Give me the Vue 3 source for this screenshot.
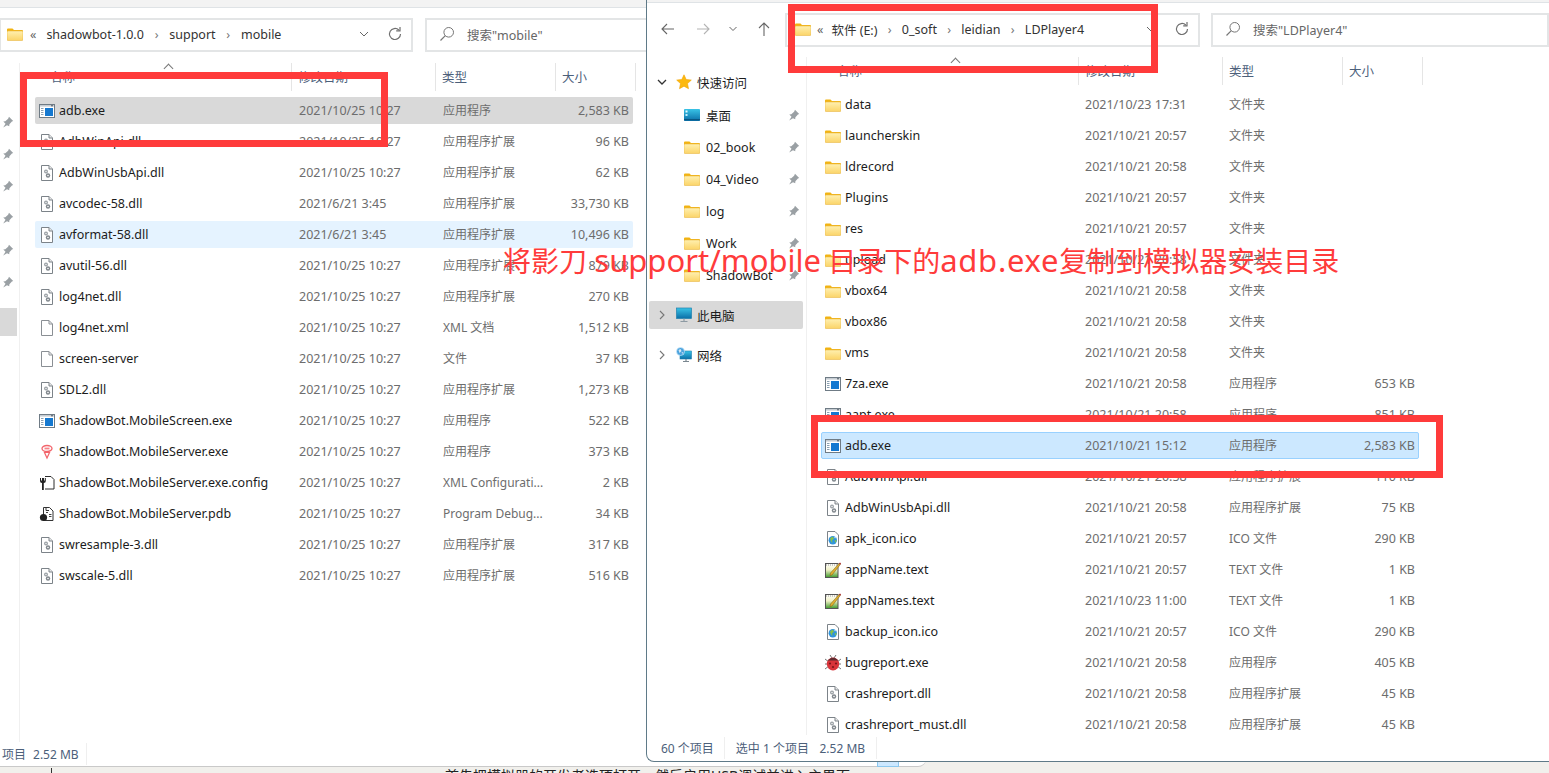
<script setup>
const dll = "应用程序扩展";
const app = "应用程序";
const dir = "文件夹";

const leftFiles = [
  { icon: "exe", name: "adb.exe", date: "2021/10/25 10:27", type: app, size: "2,583 KB", state: "picked" },
  { icon: "dll", name: "AdbWinApi.dll", date: "2021/10/25 10:27", type: dll, size: "96 KB" },
  { icon: "dll", name: "AdbWinUsbApi.dll", date: "2021/10/25 10:27", type: dll, size: "62 KB" },
  { icon: "dll", name: "avcodec-58.dll", date: "2021/6/21 3:45", type: dll, size: "33,730 KB" },
  { icon: "dll", name: "avformat-58.dll", date: "2021/6/21 3:45", type: dll, size: "10,496 KB", state: "hover" },
  { icon: "dll", name: "avutil-56.dll", date: "2021/10/25 10:27", type: dll, size: "879 KB" },
  { icon: "dll", name: "log4net.dll", date: "2021/10/25 10:27", type: dll, size: "270 KB" },
  { icon: "file", name: "log4net.xml", date: "2021/10/25 10:27", type: "XML 文档", size: "1,512 KB" },
  { icon: "file", name: "screen-server", date: "2021/10/25 10:27", type: "文件", size: "37 KB" },
  { icon: "dll", name: "SDL2.dll", date: "2021/10/25 10:27", type: dll, size: "1,273 KB" },
  { icon: "exe", name: "ShadowBot.MobileScreen.exe", date: "2021/10/25 10:27", type: app, size: "522 KB" },
  { icon: "server", name: "ShadowBot.MobileServer.exe", date: "2021/10/25 10:27", type: app, size: "373 KB" },
  { icon: "config", name: "ShadowBot.MobileServer.exe.config", date: "2021/10/25 10:27", type: "XML Configurati...", size: "2 KB" },
  { icon: "pdb", name: "ShadowBot.MobileServer.pdb", date: "2021/10/25 10:27", type: "Program Debug...", size: "34 KB" },
  { icon: "dll", name: "swresample-3.dll", date: "2021/10/25 10:27", type: dll, size: "317 KB" },
  { icon: "dll", name: "swscale-5.dll", date: "2021/10/25 10:27", type: dll, size: "516 KB" },
];

const rightFiles = [
  { icon: "folder", name: "data", date: "2021/10/23 17:31", type: dir, size: "" },
  { icon: "folder", name: "launcherskin", date: "2021/10/21 20:57", type: dir, size: "" },
  { icon: "folder", name: "ldrecord", date: "2021/10/21 20:58", type: dir, size: "" },
  { icon: "folder", name: "Plugins", date: "2021/10/21 20:57", type: dir, size: "" },
  { icon: "folder", name: "res", date: "2021/10/21 20:57", type: dir, size: "" },
  { icon: "folder", name: "upload", date: "2021/10/21 20:58", type: dir, size: "" },
  { icon: "folder", name: "vbox64", date: "2021/10/21 20:58", type: dir, size: "" },
  { icon: "folder", name: "vbox86", date: "2021/10/21 20:58", type: dir, size: "" },
  { icon: "folder", name: "vms", date: "2021/10/21 20:58", type: dir, size: "" },
  { icon: "exe", name: "7za.exe", date: "2021/10/21 20:58", type: app, size: "653 KB" },
  { icon: "exe", name: "aapt.exe", date: "2021/10/21 20:58", type: app, size: "851 KB" },
  { icon: "exe", name: "adb.exe", date: "2021/10/21 15:12", type: app, size: "2,583 KB", state: "selected" },
  { icon: "dll", name: "AdbWinApi.dll", date: "2021/10/21 20:58", type: dll, size: "110 KB" },
  { icon: "dll", name: "AdbWinUsbApi.dll", date: "2021/10/21 20:58", type: dll, size: "75 KB" },
  { icon: "ico", name: "apk_icon.ico", date: "2021/10/21 20:57", type: "ICO 文件", size: "290 KB" },
  { icon: "text", name: "appName.text", date: "2021/10/21 20:57", type: "TEXT 文件", size: "1 KB" },
  { icon: "text", name: "appNames.text", date: "2021/10/23 11:00", type: "TEXT 文件", size: "1 KB" },
  { icon: "ico", name: "backup_icon.ico", date: "2021/10/21 20:57", type: "ICO 文件", size: "290 KB" },
  { icon: "bug", name: "bugreport.exe", date: "2021/10/21 20:58", type: app, size: "405 KB" },
  { icon: "dll", name: "crashreport.dll", date: "2021/10/21 20:58", type: dll, size: "45 KB" },
  { icon: "dll", name: "crashreport_must.dll", date: "2021/10/21 20:58", type: dll, size: "45 KB" },
];

const columns = ["名称", "修改日期", "类型", "大小"];

const leftCrumbs = ["shadowbot-1.0.0", "support", "mobile"];
const rightCrumbs = ["软件 (E:)", "0_soft", "leidian", "LDPlayer4"];
const quickAccess = [
  { icon: "desktop", name: "桌面" },
  { icon: "folder", name: "02_book" },
  { icon: "folder", name: "04_Video" },
  { icon: "folder", name: "log" },
  { icon: "folder", name: "Work" },
  { icon: "folder", name: "ShadowBot" },
];
</script>

<template>
  <div class="desk">
    <svg class="defs" width="0" height="0">
      <defs>
        <linearGradient id="folderFill" x1="0" y1="0" x2="0" y2="1">
          <stop offset="0" stop-color="#fff0b0" />
          <stop offset="1" stop-color="#fbd468" />
        </linearGradient>
        <linearGradient id="blueFill" x1="0" y1="0" x2="0" y2="1">
          <stop offset="0" stop-color="#39c3e6" />
          <stop offset="1" stop-color="#0b6fa8" />
        </linearGradient>
        <linearGradient id="noteFill" x1="0" y1="0" x2="0" y2="1">
          <stop offset="0" stop-color="#ffffff" />
          <stop offset=".45" stop-color="#f2f2c8" />
          <stop offset="1" stop-color="#3f9a2c" />
        </linearGradient>
        <symbol id="i-folder" viewBox="0 0 16 16">
          <path d="M0 3.500q0-1 1-1h4.500l1.500 1.500h8q1 0 1 1V6H0z" fill="#f2b311" />
          <rect x="0" y="5" width="16" height="9.500" rx="1" fill="url(#folderFill)" stroke="#e9b949" stroke-width=".6" />
        </symbol>
        <symbol id="i-exe" viewBox="0 0 16 16">
          <rect x=".5" y="1.500" width="15" height="13" fill="#fff" stroke="#6f7b85" />
          <rect x="1" y="2" width="14" height="1.600" fill="#c5ccd2" />
          <path d="M12 2.800h2" stroke="#4b5560" />
          <rect x="6" y="5" width="8" height="8" fill="#1478d0" />
          <path d="M2 5.500h2.500M2 7.500h2.500M2 9.500h2.500M2 11.500h2.500" stroke="#8aa0b2" />
        </symbol>
        <symbol id="i-dll" viewBox="0 0 16 16">
          <path d="M2.500.5h7.500l3.500 3.500v11.500h-11z" fill="#fff" stroke="#7c8389" />
          <path d="M10 .5v3.500h3.500" fill="#e8e8e8" stroke="#7c8389" />
          <circle cx="7" cy="6.500" r="2" fill="#9aa0a5" />
          <circle cx="9" cy="10.500" r="2.200" fill="#80878d" />
          <circle cx="9" cy="10.500" r=".8" fill="#fff" />
          <circle cx="7" cy="6.500" r=".7" fill="#fff" />
        </symbol>
        <symbol id="i-file" viewBox="0 0 16 16">
          <path d="M2.500.5h7.500l3.500 3.500v11.500h-11z" fill="#fff" stroke="#8a8f94" />
          <path d="M10 .5v3.500h3.500" fill="none" stroke="#8a8f94" />
        </symbol>
        <symbol id="i-server" viewBox="0 0 16 16">
          <ellipse cx="8" cy="4.500" rx="5" ry="3" fill="#fff" stroke="#f2646b" stroke-width="1.300" />
          <rect x="5.500" y="3.600" width="5" height="1.800" fill="#f58489" />
          <path d="M5.500 8.500h5L8 14z" fill="#fff" stroke="#f2646b" stroke-width="1.200" />
        </symbol>
        <symbol id="i-config" viewBox="0 0 16 16">
          <path d="M6 1.500h6l3 3v9.500H6" fill="#fff" stroke="#2c2c2c" />
          <path d="M1 3v3q0 2 2 2v7h1.800V8q2 0 2-2V3l-1 0v2.600H5V3H3v2.600H2V3z" fill="#222" />
        </symbol>
        <symbol id="i-pdb" viewBox="0 0 16 16">
          <path d="M4.500 1.500h6l3.500 3.500v9.500H4.500z" fill="#fff" stroke="#333" />
          <path d="M7 6.500h2M10 8.500h2.500M10 10.500h2.500" stroke="#444" />
          <circle cx="4.500" cy="11.500" r="3.600" fill="#222" />
          <path d="M7 1.500v3h3" fill="none" stroke="#333" />
        </symbol>
        <symbol id="i-ico" viewBox="0 0 16 16">
          <path d="M2.500.5h7.500l3.500 3.500v11.500h-11z" fill="#fff" stroke="#7c8389" />
          <circle cx="7.800" cy="9.200" r="4.200" fill="#2f94dc" />
          <path d="M5 7.500l2.500-2 1.500 2-2 2 .5 2.500-1.500-1.500zM9.500 9.500l2.300-.5-1.300 3z" fill="#86c24c" />
          <path d="M9 5.500l2 1-1 1z" fill="#e8f4fb" />
        </symbol>
        <symbol id="i-text" viewBox="0 0 16 16">
          <rect x=".5" y="1.500" width="12.500" height="14" fill="url(#noteFill)" stroke="#555" />
          <path d="M1 3h11" stroke="#999" stroke-dasharray="1 1" />
          <path d="M5.500 11l8.500-9.500 1.300 1L7 13l-2 .5z" fill="#e0b030" stroke="#7a5a10" stroke-width=".5" />
          <path d="M14 1.500l1-1 1 1-.8 1.200z" fill="#a01818" />
        </symbol>
        <symbol id="i-bug" viewBox="0 0 16 16">
          <path d="M0 4l4 3M16 4l-4 3M0 9h3M16 9h-3M0 14l4-3M16 14l-4-3M5 0l2 3M11 0L9 3" stroke="#777" stroke-width="1" />
          <ellipse cx="8" cy="9" rx="6.200" ry="6.500" fill="#d8343a" />
          <path d="M2.500 5.500q5.500-5.500 11 0z" fill="#5d2b2f" />
          <circle cx="5" cy="8.500" r="1.100" fill="#7c1519" />
          <circle cx="11" cy="8.500" r="1.100" fill="#7c1519" />
          <circle cx="8" cy="12" r="1.100" fill="#7c1519" />
        </symbol>
        <symbol id="i-star" viewBox="0 0 16 16">
          <path d="M8 .8l2.200 4.700 5.100.6-3.800 3.500 1 5.100L8 12.200l-4.500 2.500 1-5.100L.7 6.100l5.100-.6z" fill="#fcb90f" stroke="#f2a200" stroke-width=".6" />
        </symbol>
        <symbol id="i-desktop" viewBox="0 0 16 16">
          <rect x="0" y="2" width="16" height="12" rx=".8" fill="url(#blueFill)" />
          <rect x="1.500" y="3.500" width="2" height="2" fill="#e8fbff" />
          <rect x="1.500" y="7" width="2" height="2" fill="#bdeeff" />
          <path d="M0 12.700h16" stroke="#084f7a" />
        </symbol>
        <symbol id="i-computer" viewBox="0 0 16 16">
          <rect x=".5" y="1" width="15" height="10.500" fill="url(#blueFill)" stroke="#1f80ad" stroke-width=".7" />
          <path d="M8 11.500v2.500M4.500 14.500h7" stroke="#8d9aa3" stroke-width="1.200" />
        </symbol>
        <symbol id="i-network" viewBox="0 0 16 16">
          <rect x="4" y="4" width="11.500" height="8" fill="url(#blueFill)" stroke="#1f80ad" stroke-width=".6" />
          <path d="M10 12v2M7 14.500h6" stroke="#7a8790" stroke-width="1.200" />
          <circle cx="4.500" cy="4.500" r="4" fill="#4aa3de" stroke="#dff2ff" stroke-width=".6" />
          <path d="M2.500 3l2-1 1 2-2 2zM5.500 5.500l1.500-.5-.5 2z" fill="#d9e8f2" />
        </symbol>
        <symbol id="i-pin" viewBox="0 0 12 12">
          <path d="M7 .8l4.200 4.200-1.300.5-2.500 2.800-.2 2L5 9.200 1.200 11.500 3.500 7.700 1.300 5.500l2-.2L6.100 2.700z" fill="#9aa0a4" />
        </symbol>
        <symbol id="i-search" viewBox="0 0 16 16">
          <circle cx="9.700" cy="6.300" r="4.800" fill="none" stroke="#767676" />
          <path d="M6.300 9.700L1.500 14.500" stroke="#767676" stroke-width="1.200" />
        </symbol>
        <symbol id="i-refresh" viewBox="0 0 16 16">
          <path d="M13.500 8a5.500 5.500 0 1 1-1.700-4" fill="none" stroke="#6f6f6f" stroke-width="1.200" />
          <path d="M13 1v3.800H9.200" fill="none" stroke="#6f6f6f" stroke-width="1.200" />
        </symbol>
      </defs>
    </svg>

    <!-- back window -->
    <section class="window back">
      <div class="topband"></div>
      <div class="toolbar">
        <div class="address">
          <svg class="addr-folder"><use href="#i-folder" /></svg>
          <span class="double">«</span>
          <template v-for="(c, i) in leftCrumbs" :key="c">
            <span v-if="i" class="chev">›</span>
            <span class="crumb">{{ c }}</span>
          </template>
          <svg class="drop" viewBox="0 0 10 6"><path d="M1 1l4 4 4-4" fill="none" stroke="#666" /></svg>
          <svg class="refresh"><use href="#i-refresh" /></svg>
        </div>
        <div class="search">
          <svg class="search-icon"><use href="#i-search" /></svg>
          <span>搜索"mobile"</span>
        </div>
      </div>
      <div class="body">
        <aside class="stub">
          <svg v-for="n in 6" :key="n" class="stub-pin"><use href="#i-pin" /></svg>
          <div class="stub-sel"></div>
        </aside>
        <main class="main">
          <div class="head">
            <span class="sort"></span>
            <span v-for="col in columns" :key="col" class="head-cell">{{ col }}</span>
          </div>
          <div
            v-for="f in leftFiles"
            :key="f.name"
            class="row"
            :class="f.state"
          >
            <svg class="icon"><use :href="'#i-' + f.icon" /></svg>
            <span class="name">{{ f.name }}</span>
            <span class="date">{{ f.date }}</span>
            <span class="type">{{ f.type }}</span>
            <span class="size">{{ f.size }}</span>
          </div>
        </main>
      </div>
      <div class="status">
        <span>项目</span>
        <span>2.52 MB</span>
        <i class="status-div"></i>
      </div>
    </section>

    <i class="tick"></i>
    <p class="under">首先把模拟器的开发者选项打开，然后启用USB调试并进入主界面</p>
    <div class="peek"></div>

    <!-- front window -->
    <section class="window front">
      <div class="topband"></div>
      <div class="toolbar">
        <div class="nav">
          <svg viewBox="0 0 16 16"><path d="M14 8H2M7 3L2 8l5 5" fill="none" stroke="#666" stroke-width="1.100" /></svg>
          <svg viewBox="0 0 16 16"><path d="M2 8h12M9 3l5 5-5 5" fill="none" stroke="#b4b4b4" stroke-width="1.100" /></svg>
          <svg class="nav-small" viewBox="0 0 10 6"><path d="M1.500 1l3.500 3.500L8.500 1" fill="none" stroke="#666" /></svg>
          <svg viewBox="0 0 16 16"><path d="M8 15V2M3 7l5-5 5 5" fill="none" stroke="#666" stroke-width="1.100" /></svg>
        </div>
        <div class="address">
          <svg class="addr-folder"><use href="#i-folder" /></svg>
          <span class="double">«</span>
          <template v-for="(c, i) in rightCrumbs" :key="c">
            <span v-if="i" class="chev">›</span>
            <span class="crumb">{{ c }}</span>
          </template>
          <svg class="drop" viewBox="0 0 10 6"><path d="M1 1l4 4 4-4" fill="none" stroke="#666" /></svg>
          <svg class="refresh"><use href="#i-refresh" /></svg>
        </div>
        <div class="search">
          <svg class="search-icon"><use href="#i-search" /></svg>
          <span>搜索"LDPlayer4"</span>
        </div>
      </div>
      <div class="body">
        <aside class="tree">
          <div class="tree-row tree-top tree-quick">
            <svg class="tree-arrow" viewBox="0 0 10 10"><path d="M1 3l4 4 4-4" fill="none" stroke="#333" stroke-width="1.300" /></svg>
            <svg class="tree-icon"><use href="#i-star" /></svg>
            <span>快速访问</span>
          </div>
          <div v-for="q in quickAccess" :key="q.name" class="tree-row tree-sub">
            <svg class="tree-icon"><use :href="'#i-' + q.icon" /></svg>
            <span class="tree-name">{{ q.name }}</span>
            <svg class="tree-pin"><use href="#i-pin" /></svg>
          </div>
          <div class="tree-row tree-top tree-picked">
            <svg class="tree-arrow" viewBox="0 0 10 10"><path d="M3 1l4 4-4 4" fill="none" stroke="#777" stroke-width="1.100" /></svg>
            <svg class="tree-icon"><use href="#i-computer" /></svg>
            <span>此电脑</span>
          </div>
          <div class="tree-row tree-top">
            <svg class="tree-arrow" viewBox="0 0 10 10"><path d="M3 1l4 4-4 4" fill="none" stroke="#777" stroke-width="1.100" /></svg>
            <svg class="tree-icon"><use href="#i-network" /></svg>
            <span>网络</span>
          </div>
        </aside>
        <main class="main">
          <div class="head">
            <span class="sort"></span>
            <span v-for="col in columns" :key="col" class="head-cell">{{ col }}</span>
          </div>
          <div
            v-for="f in rightFiles"
            :key="f.name"
            class="row"
            :class="f.state"
          >
            <svg class="icon"><use :href="'#i-' + f.icon" /></svg>
            <span class="name">{{ f.name }}</span>
            <span class="date">{{ f.date }}</span>
            <span class="type">{{ f.type }}</span>
            <span class="size">{{ f.size }}</span>
          </div>
        </main>
      </div>
      <div class="status">
        <span>60 个项目</span>
        <i class="status-div"></i>
        <span>选中 1 个项目</span>
        <span>2.52 MB</span>
        <i class="status-div"></i>
      </div>
    </section>

    <!-- annotations drawn on top of the screenshot -->
    <div class="mark mark-a"></div>
    <div class="mark mark-b"></div>
    <div class="mark mark-c"></div>
    <div class="caption">将影刀 <span class="latin">support/mobile</span> 目录下的<span class="latin wide">adb.exe</span>复制到模拟器安装目录</div>
  </div>
</template>

<style>
html,
body {
  margin: 0;
  overflow: hidden;
}
</style>

<style scoped>
.desk {
  position: relative;
  width: 1549px;
  height: 773px;
  overflow: hidden;
  background: #f1f0ec;
  font-family: "Noto Sans", "Noto Sans CJK SC", sans-serif;
  font-size: 12.5px;
  color: #1c1c1c;
}

.defs {
  position: absolute;
}

.window {
  background: #fff;
  display: flex;
  flex-direction: column;
  box-sizing: border-box;
}

.back {
  width: 926px;
  height: 767px;
  border-bottom: 1px solid #c9c9c9;
  border-bottom-right-radius: 8px;
}

.front {
  position: absolute;
  left: 646px;
  top: 0;
  width: 903px;
  height: 762px;
  border-left: 1px solid #5f7a88;
  border-bottom: 1px solid #5f7a88;
  border-bottom-left-radius: 8px;
}

.topband {
  background: #f3f3f3;
  border-bottom: 1px solid #dfe3e6;
}

.back .topband {
  height: 7px;
}

.front .topband {
  height: 2px;
}

.toolbar {
  display: flex;
  align-items: flex-start;
  padding: 10px 0 8px;
}

.address,
.search {
  box-sizing: border-box;
  height: 34px;
  padding-bottom: 2px;
  border: 2px solid #e3e5e6;
  display: flex;
  align-items: center;
  color: #333;
}

.back .address {
  width: 414px;
  margin-left: -1px;
  margin-right: 12px;
  padding-left: 6px;
}

.back .double {
  margin: 0 10px 0 7px;
}

.back .search {
  width: 300px;
  padding-left: 12px;
}

.front .address {
  width: 415px;
  padding-left: 8px;
}

.front .search {
  flex: 1;
  margin-left: 11px;
  padding-left: 12px;
}

.addr-folder {
  width: 16px;
  height: 16px;
  flex: none;
}

.double {
  color: #666;
  margin: 0 8px 0 6px;
}

.chev {
  color: #777;
  margin: 0 10.75px;
}

.front .chev {
  margin: 0 10.25px;
}

.crumb {
  white-space: nowrap;
}

.drop {
  width: 10px;
  height: 6px;
  margin-left: auto;
}

.refresh {
  width: 16px;
  height: 16px;
  margin: 0 8px 0 18px;
}

.search {
  color: #666;
}

.search-icon {
  width: 16px;
  height: 16px;
  margin-right: 12px;
}

.nav {
  width: 138px;
  height: 32px;
  display: flex;
  align-items: center;
  gap: 19px;
  padding-left: 13px;
  box-sizing: border-box;
}

.nav svg {
  width: 16px;
  height: 16px;
  flex: none;
}

.nav .nav-small {
  width: 10px;
  height: 6px;
  margin: 0 -1px 0 -2px;
}

.body {
  flex: 1;
  display: flex;
  min-height: 0;
}

.back .body {
  padding-top: 3px;
}

.front .body {
  padding-top: 2px;
}

/* clipped sidebar of the back window */
.stub {
  position: relative;
  width: 20px;
  box-sizing: border-box;
  border-right: 1px solid #f0f0f0;
  display: flex;
  flex-direction: column;
  gap: 20px;
  padding-top: 53px;
  padding-left: 2px;
}

.stub-pin {
  width: 12px;
  height: 12px;
  flex: none;
}

.stub-sel {
  position: absolute;
  left: 0;
  top: 245px;
  width: 17px;
  height: 28px;
  background: #d9d9d9;
}

.tree {
  width: 160px;
  box-sizing: border-box;
  border-right: 1px solid #f0f0f0;
  padding: 11px 0 0 2px;
}

.tree-row {
  display: flex;
  align-items: center;
  height: 28px;
  margin-bottom: 4px;
  width: 154px;
  box-sizing: border-box;
  border-radius: 2px;
}

.tree-top {
  padding-left: 8px;
}

.tree-quick {
  margin-bottom: 5px;
}

.tree-arrow {
  width: 10px;
  height: 10px;
  margin-right: 9px;
}

.tree-icon {
  width: 16px;
  height: 16px;
  margin-right: 5px;
  flex: none;
}

.tree-sub {
  padding-left: 35px;
}

.tree-sub .tree-icon {
  margin-right: 6px;
}

.tree-name {
  flex: 1;
}

.tree-pin {
  width: 12px;
  height: 12px;
  margin-right: 3px;
}

.tree-picked {
  background: #d9d9d9;
  margin-top: 12px;
  margin-bottom: 12px;
}

.main {
  flex: 1;
  min-width: 0;
}

.head {
  position: relative;
  display: flex;
  height: 28px;
  margin-bottom: 6px;
  color: #4c607a;
  line-height: 30px;
}

.head-cell {
  box-sizing: border-box;
  border-right: 1px solid #e5e5e5;
  padding-left: 6px;
}

.head-cell:nth-of-type(2) {
  width: 272px;
  padding-left: 30px;
}

.head-cell:nth-of-type(3) {
  width: 144px;
}

.head-cell:nth-of-type(4) {
  width: 120px;
}

.head-cell:nth-of-type(5) {
  width: 80px;
}

.sort {
  position: absolute;
  left: 145px;
  top: 2px;
  width: 6px;
  height: 6px;
  border-left: 1px solid #777;
  border-top: 1px solid #777;
  transform: rotate(45deg);
}

.back .main {
  padding-left: 15px;
}

.back .head {
  margin-left: -15px;
}

.front .main {
  padding-left: 14px;
}

.front .head {
  margin-left: -14px;
}

.row {
  box-sizing: border-box;
  width: 598px;
  height: 27px;
  margin-bottom: 4px;
  display: grid;
  grid-template-columns: 23px 240px 144px 120px 66px;
  align-items: center;
  border: 1px solid transparent;
  border-radius: 2px;
  white-space: nowrap;
}

.row .icon {
  width: 16px;
  height: 16px;
  margin-left: 3px;
}

.name {
  color: #1c1c1c;
}

.date {
  color: #6d6d6d;
}

.type {
  color: #6d6d6d;
  font-size: 12px;
  margin-top: -1px;
}

.size {
  color: #6d6d6d;
  text-align: right;
}

.picked {
  background: #d9d9d9;
}

.hover {
  background: #e5f3ff;
}

.selected {
  background: #cce8ff;
  border-color: #99d1ff;
}

.status {
  flex: none;
  display: flex;
  align-items: center;
  height: 26px;
  font-size: 12px;
  color: #4c607a;
  gap: 10.5px;
}

.front .status {
  padding-left: 14px;
}

.back .status {
  height: 24px;
  padding-left: 2px;
  gap: 7px;
}

.status-div {
  width: 1px;
  height: 22px;
  background: #efefef;
}

.tick {
  position: absolute;
  left: 51px;
  top: 768px;
  width: 1px;
  height: 5px;
  background: #333;
}

.under {
  position: absolute;
  left: 445px;
  top: 767px;
  margin: 0;
  font-size: 14px;
  line-height: 18px;
  white-space: nowrap;
  color: #222;
}

.peek {
  position: absolute;
  left: 877px;
  top: 760px;
  box-sizing: border-box;
  width: 22px;
  height: 7px;
  background: #cce8ff;
  border: 1px solid #8cc8ee;
}

.mark {
  position: absolute;
  box-sizing: border-box;
  border: 7px solid #ff3b3b;
}

.mark-a {
  left: 20px;
  top: 72px;
  width: 368px;
  height: 75px;
}

.mark-b {
  left: 788px;
  top: 4px;
  width: 370px;
  height: 69px;
}

.mark-c {
  left: 811px;
  top: 415px;
  width: 632px;
  height: 63px;
}

.caption {
  position: absolute;
  left: 503px;
  top: 240px;
  font-size: 28px;
  line-height: 40px;
  white-space: nowrap;
  color: #ff3b3b;
}

.latin {
  font-size: 31px;
}

.wide {
  letter-spacing: 0.7px;
}
</style>
